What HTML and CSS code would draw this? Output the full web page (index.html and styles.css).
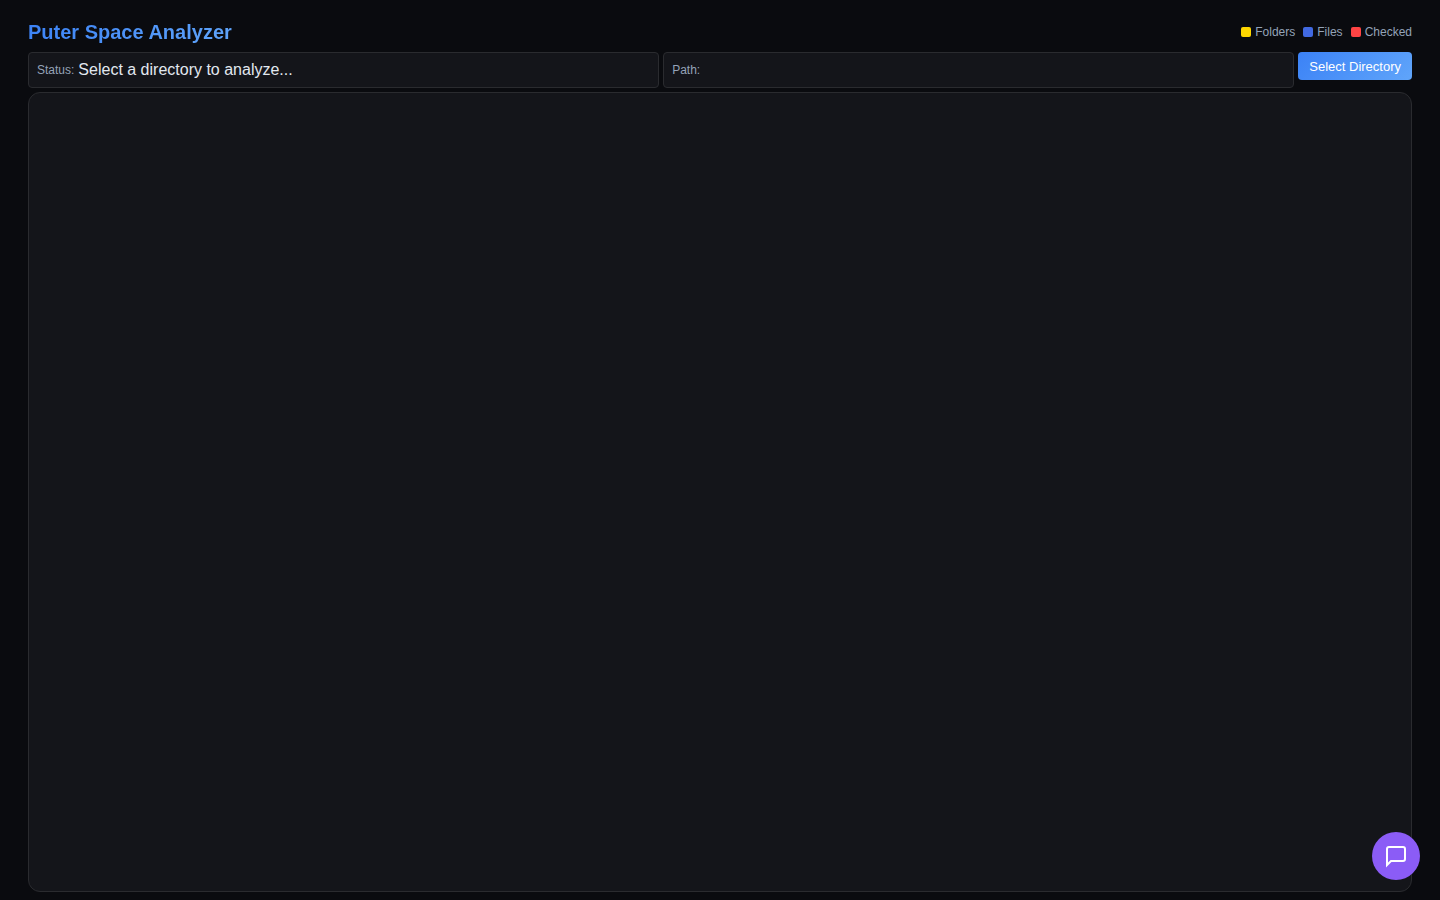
FILE: index.html
```html
<!DOCTYPE html>
<html lang="en">
<head>
    <meta charset="UTF-8">
    <meta name="viewport" content="width=device-width, initial-scale=1.0">
    <title>Puter Space Analyzer</title>
    <link rel="stylesheet" href="styles.css">
</head>
<body>
    <div class="container">
        <header class="header">
            <h1>Puter Space Analyzer</h1>
            <div class="legend">
                <div class="legend-item"><span class="legend-color folders"></span>Folders</div>
                <div class="legend-item"><span class="legend-color files"></span>Files</div>
                <div class="legend-item"><span class="legend-color checked"></span>Checked</div>
            </div>
        </header>
        <div class="controls">
            <div class="info-box">
                <span class="info-label">Status:</span>
                <span id="status">Select a directory to analyze...</span>
            </div>
            <div class="info-box">
                <span class="info-label">Path:</span>
                <span id="path"></span>
            </div>
            <button type="button" class="select-btn">Select Directory</button>
        </div>
        <main class="visualization" id="visualization"></main>
    </div>

    <button type="button" class="chat-btn" aria-label="Open chat">
        <svg width="24" height="24" viewBox="0 0 24 24" fill="none" stroke="currentColor" stroke-width="2">
            <path d="M21 15a2 2 0 0 1-2 2H7l-4 4V5a2 2 0 0 1 2-2h14a2 2 0 0 1 2 2z"/>
        </svg>
    </button>
</body>
</html>
```
FILE: styles.css
```css
* {
    box-sizing: border-box;
    margin: 0;
    padding: 0;
}

body {
    font-family: "Liberation Sans", Arial, sans-serif;
    background: #0a0b0f;
    color: #e2e8f0;
    min-height: 100vh;
}

.container {
    display: flex;
    flex-direction: column;
    gap: 4px;
    min-height: 100vh;
    padding: 16px 28px 8px;
}

.header {
    display: flex;
    justify-content: space-between;
    align-items: center;
    height: 32px;
}

h1 {
    font-size: 20px;
    font-weight: 600;
    background: linear-gradient(135deg, #3b82f6, #60a5fa);
    -webkit-background-clip: text;
    background-clip: text;
    color: transparent;
}

.legend {
    display: flex;
    gap: 8px;
    font-size: 12px;
    line-height: 19px;
    color: #94a3b8;
}

.legend-item {
    display: flex;
    align-items: center;
    gap: 4px;
}

.legend-color {
    width: 10px;
    height: 10px;
    border-radius: 2px;
}

.folders {
    background: #ffd700;
}

.files {
    background: #4169e1;
}

.checked {
    background: #ff4444;
}

.controls {
    display: flex;
    align-items: flex-start;
    gap: 4px;
}

.info-box {
    flex: 1;
    display: flex;
    align-items: center;
    gap: 4px;
    height: 36px;
    padding: 0 8px;
    background: #14151a;
    border: 1px solid #2a2b2f;
    border-radius: 4px;
}

.info-label {
    font-size: 12px;
    line-height: 19px;
    color: #94a3b8;
}

.select-btn {
    height: 28px;
    padding: 0 11px;
    font-family: inherit;
    font-size: 13px;
    color: white;
    background: linear-gradient(135deg, #3b82f6, #60a5fa);
    border: none;
    border-radius: 4px;
    cursor: pointer;
}

.visualization {
    flex: 1;
    background: #14151a;
    border: 1px solid #2a2b2f;
    border-radius: 12px;
}

/* Floating chat button */
.chat-btn {
    position: fixed;
    right: 20px;
    bottom: 20px;
    display: flex;
    align-items: center;
    justify-content: center;
    width: 48px;
    height: 48px;
    color: white;
    background: #8b5cf6;
    border: none;
    border-radius: 50%;
    cursor: pointer;
}
```
